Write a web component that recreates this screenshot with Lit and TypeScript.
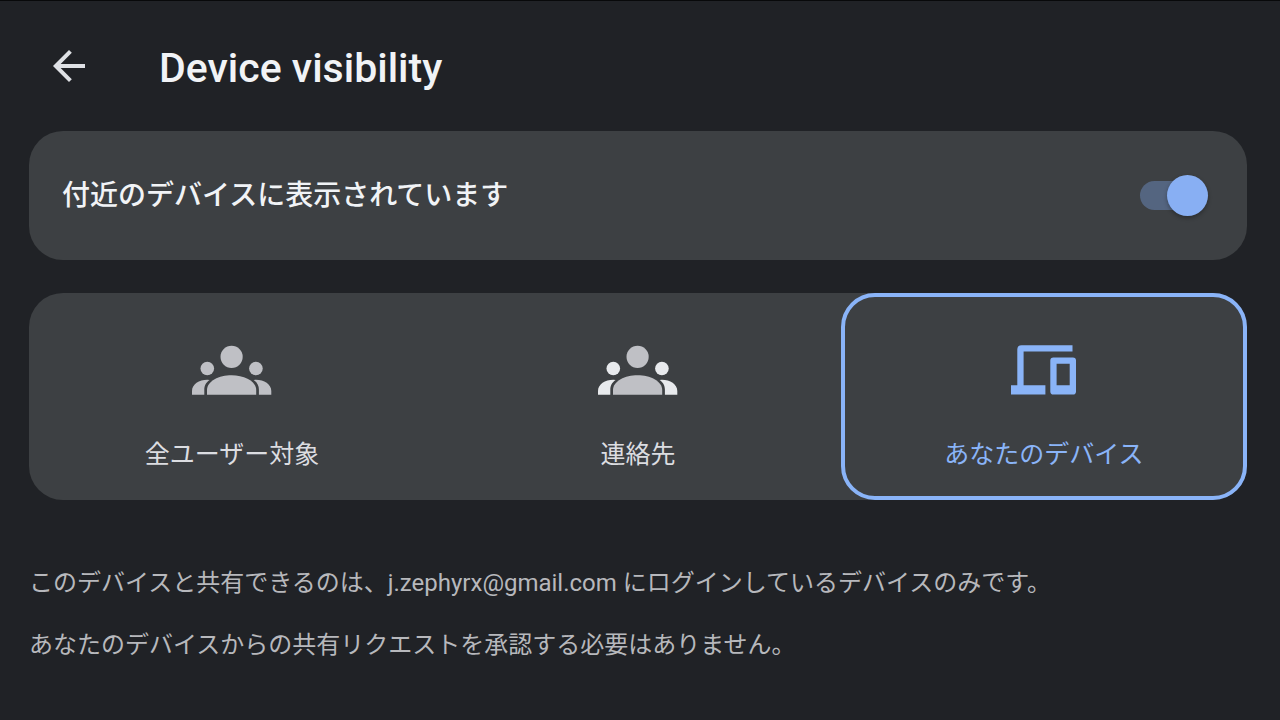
import { LitElement, html, css, svg } from "lit";
import { customElement, property, state } from "lit/decorators.js";

type Visibility = "everyone" | "contacts" | "own";

const peopleIcon = svg`
  <g class="centre">
    <circle cx="39.6" cy="11.8" r="11.1"></circle>
    <path d="M15 49.8V45C15 36 27.1 30.2 39.6 30.2S64.2 36 64.2 45V49.8Z"></path>
  </g>
  <g class="sides">
    <circle cx="15.3" cy="23.5" r="6.8"></circle>
    <circle cx="63.9" cy="23.5" r="6.8"></circle>
    <path d="M0 49.8V46C0 39.2 7.1 34.7 15.3 34.7L17.6 34.9C13.6 37.6 12.3 41 12.3 44.5V49.8Z"></path>
    <path d="M79.3 49.8V46C79.3 39.2 72.1 34.7 63.9 34.7L61.6 34.9C65.6 37.6 66.9 41 66.9 44.5V49.8Z"></path>
  </g>`;

const devicesIcon = svg`
  <path d="M61.5 0.3V6.4H12.6V40.2H34.4V49.6H0V40.2H6.3V4.6Q6.3 0.3 10.6 0.3Z"></path>
  <path fill-rule="evenodd" d="M42.4 12.4H61.9Q65 12.4 65 15.5V46.5Q65 49.6 61.9 49.6H42.4Q39.3 49.6 39.3 46.5V15.5Q39.3 12.4 42.4 12.4ZM45.6 18.8V40.2H58.7V18.8Z"></path>`;

@customElement("visibility-option")
class VisibilityOption extends LitElement {
  @property() label = "";
  @property() value: Visibility = "everyone";
  @property({ type: Boolean, reflect: true }) selected = false;

  static styles = css`
    :host {
      display: grid;
    }
    .option {
      display: flex;
      flex-direction: column;
      align-items: center;
      gap: 42px;
      box-sizing: border-box;
      padding: 48px 16px 23px;
      border: 4px solid transparent;
      border-radius: 34px;
      color: #dcdde1;
      font-size: 25px;
      line-height: 36px;
      cursor: pointer;
    }
    :host([selected]) .option {
      border-color: #8ab4f8;
      color: #8ab4f8;
    }
    .radio {
      position: absolute;
      opacity: 0;
      pointer-events: none;
    }
    .icon {
      display: block;
      height: 50px;
      fill: currentColor;
    }
    .everyone {
      fill: #bfc0c5;
    }
    .contacts .centre {
      fill: #bfc0c5;
    }
    .contacts .sides {
      fill: #e8eaed;
    }
  `;

  private choose() {
    this.dispatchEvent(new CustomEvent("choose", { detail: this.value }));
  }

  render() {
    const own = this.value === "own";
    return html`
      <label class="option">
        <input class="radio" type="radio" name="visibility" .checked=${this.selected} @change=${this.choose} />
        <svg class="icon ${this.value}" viewBox=${own ? "0 0 67 50" : "0 0 80 50"} aria-hidden="true">
          ${own ? devicesIcon : peopleIcon}
        </svg>
        <span>${this.label}</span>
      </label>
    `;
  }
}

@customElement("app-root")
class AppRoot extends LitElement {
  @state() private visibility: Visibility = "own";

  static styles = css`
    :host {
      display: block;
      box-sizing: border-box;
      min-height: 100vh;
      border-top: 1px solid #08090a;
      padding: 0 33px 32px 29px;
      background: #202226;
      color: #f1f3f6;
      font-family: Roboto, "Noto Sans CJK JP", sans-serif;
    }
    .header {
      display: flex;
      align-items: center;
      gap: 66px;
      height: 130px;
      padding: 0 16px;
      box-sizing: border-box;
    }
    .back {
      display: grid;
      padding: 0;
      border: 0;
      background: none;
      color: #dfe1e5;
      cursor: pointer;
    }
    .back svg {
      width: 48px;
      height: 48px;
      fill: currentColor;
    }
    .title {
      margin: 0;
      padding-top: 4px;
      font-size: 41px;
      font-weight: 500;
      line-height: 48px;
    }
    .card {
      border-radius: 34px;
      background: #3d4043;
    }
    .toggle {
      display: flex;
      align-items: center;
      justify-content: space-between;
      min-height: 129px;
      margin-bottom: 33px;
      padding: 0 39px 0 33px;
      box-sizing: border-box;
      font-size: 28px;
      font-weight: 500;
      line-height: 42px;
      cursor: pointer;
    }
    .switch {
      appearance: none;
      display: grid;
      align-items: center;
      width: 68px;
      height: 41px;
      margin: 0;
      cursor: pointer;
    }
    .switch::before,
    .switch::after {
      content: "";
      grid-area: 1 / 1;
    }
    .switch::before {
      width: 60px;
      height: 29px;
      border-radius: 15px;
      background: #6b6e72;
    }
    .switch::after {
      width: 41px;
      height: 41px;
      border-radius: 50%;
      background: #bdc1c6;
      box-shadow: 0 2px 4px rgba(0, 0, 0, 0.3);
    }
    .switch:checked::before {
      background: #546580;
    }
    .switch:checked::after {
      justify-self: end;
      background: #88aff3;
    }
    .options {
      display: grid;
      grid-template-columns: repeat(3, 1fr);
      margin: 0;
      padding: 0;
      border: 0;
    }
    .notes {
      display: grid;
      gap: 26px;
      margin-top: 65px;
      color: #b7b8bc;
      font-size: 24px;
      line-height: 36px;
    }
    .notes p {
      margin: 0;
    }
  `;

  private option(value: Visibility, label: string) {
    return html`<visibility-option
      .value=${value}
      .label=${label}
      ?selected=${this.visibility === value}
      @choose=${(e: CustomEvent<Visibility>) => (this.visibility = e.detail)}
    ></visibility-option>`;
  }

  render() {
    return html`
      <header class="header">
        <button class="back" type="button" aria-label="Back">
          <svg viewBox="0 0 24 24" aria-hidden="true">
            <path d="M20 11H7.83l5.59-5.59L12 4l-8 8 8 8 1.41-1.41L7.83 13H20v-2z"></path>
          </svg>
        </button>
        <h1 class="title">Device visibility</h1>
      </header>
      <main lang="ja">
        <label class="card toggle">
          <span>付近のデバイスに表示されています</span>
          <input class="switch" type="checkbox" role="switch" checked />
        </label>
        <fieldset class="card options" aria-label="Device visibility">
          ${this.option("everyone", "全ユーザー対象")}
          ${this.option("contacts", "連絡先")}
          ${this.option("own", "あなたのデバイス")}
        </fieldset>
        <div class="notes">
          <p>このデバイスと共有できるのは、j.zephyrx@gmail.com にログインしているデバイスのみです。</p>
          <p>あなたのデバイスからの共有リクエストを承認する必要はありません。</p>
        </div>
      </main>
    `;
  }
}
